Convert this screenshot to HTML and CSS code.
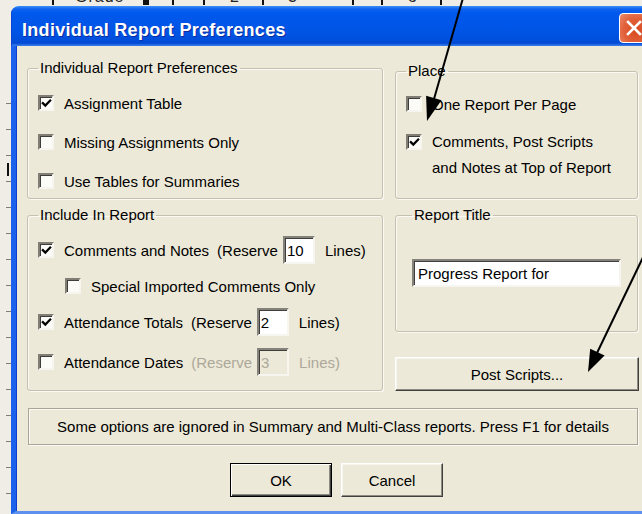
FILE: index.html
```html
<!DOCTYPE html>
<html lang="en">
<head>
<meta charset="utf-8">
<title>Individual Report Preferences</title>
<link rel="stylesheet" href="styles.css">
</head>
<body>
<div class="screen">
  <!-- bottom edge of the document behind the dialog -->
  <div class="backdrop-top">
    <span></span>
    <span class="tick"></span>
    <span class="glyph">Grade</span>
    <span class="block"></span>
    <span class="tick"></span>
    <span class="tick"></span>
    <span class="glyph">2</span>
    <span class="tick"></span>
    <span class="glyph">3</span>
    <span class="tick"></span>
    <span class="tick"></span>
    <span class="glyph">o</span>
    <span class="tick"></span>
  </div>

  <div class="desk-row">
    <div class="backdrop-left"><div class="ticks"><span class="bar"></span></div></div>

    <div class="window">
      <div class="titlebar">
        <span class="title">Individual Report Preferences</span>
        <span class="close-btn">
          <svg width="18" height="18" viewBox="0 0 18 18"><path d="M3 3 L15 15 M15 3 L3 15" stroke="#fff" stroke-width="2.6" stroke-linecap="square"/></svg>
        </span>
      </div>

      <div class="client">
        <div class="panes">
          <div class="col-left">
            <fieldset class="group g-prefs">
              <legend>Individual Report Preferences</legend>
              <div class="stack stack-wide">
                <label class="opt"><span class="cb"><svg viewBox="0 0 12 12"><path d="M2 5.6 L4.7 8.3 L10 2.8" /></svg></span>Assignment Table</label>
                <label class="opt"><span class="cb"></span>Missing Assignments Only</label>
                <label class="opt"><span class="cb"></span>Use Tables for Summaries</label>
              </div>
            </fieldset>

            <fieldset class="group g-include">
              <legend>Include In Report</legend>
              <div class="stack">
                <div class="opt tall">
                  <span class="cb"><svg viewBox="0 0 12 12"><path d="M2 5.6 L4.7 8.3 L10 2.8" /></svg></span>
                  <span>Comments and Notes</span>
                  <span class="paren">(Reserve</span>
                  <input class="field num" type="text" value="10">
                  <span class="lines">Lines)</span>
                </div>
                <div class="opt tall indent">
                  <span class="cb"></span>
                  <span>Special Imported Comments Only</span>
                </div>
                <div class="opt tall">
                  <span class="cb"><svg viewBox="0 0 12 12"><path d="M2 5.6 L4.7 8.3 L10 2.8" /></svg></span>
                  <span>Attendance Totals</span>
                  <span class="paren">(Reserve</span>
                  <input class="field num" type="text" value="2">
                  <span class="lines">Lines)</span>
                </div>
                <div class="opt tall spaced">
                  <span class="cb"></span>
                  <span>Attendance Dates</span>
                  <span class="paren muted">(Reserve</span>
                  <input class="field num off" type="text" value="3" disabled>
                  <span class="lines muted">Lines)</span>
                </div>
              </div>
            </fieldset>
          </div>

          <div class="col-right">
            <fieldset class="group g-place">
              <legend>Place</legend>
              <label class="opt"><span class="cb"></span>One Report Per Page</label>
              <label class="opt two-line"><span class="cb"><svg viewBox="0 0 12 12"><path d="M2 5.6 L4.7 8.3 L10 2.8" /></svg></span><span>Comments, Post Scripts<br>and Notes at Top of Report</span></label>
            </fieldset>

            <fieldset class="group g-title">
              <legend>Report Title</legend>
              <input class="field title-field" type="text" value="Progress Report for">
            </fieldset>

            <button class="btn btn-wide" type="button">Post Scripts...</button>
          </div>
        </div>

        <div class="note">Some options are ignored in Summary and Multi-Class reports. Press F1 for details</div>

        <div class="actions">
          <button class="btn btn-default" type="button">OK</button>
          <button class="btn" type="button">Cancel</button>
        </div>
      </div>
    </div>
  </div>

  <!-- hand-drawn pointer arrows laid over the dialog -->
  <svg class="annotations" width="642" height="514" viewBox="0 0 642 514">
    <line x1="463" y1="-2" x2="434" y2="99" stroke="#000" stroke-width="2"/>
    <polygon points="427,121 441.5,100.3 426.1,95.7" fill="#000"/>
    <line x1="647" y1="249" x2="597" y2="353" stroke="#000" stroke-width="2"/>
    <polygon points="588,372 604.6,355.5 590.2,348.7" fill="#000"/>
  </svg>
</div>
</body>
</html>
```

FILE: styles.css
```css
* { box-sizing: border-box; }

html, body { margin: 0; padding: 0; }

body {
  width: 642px;
  height: 514px;
  overflow: hidden;
  background: #efede6;
  font-family: "Liberation Sans", Arial, sans-serif;
  font-size: 15px;
  letter-spacing: 0;
  color: #000;
}

.screen {
  position: relative;
  width: 642px;
  height: 514px;
  display: flex;
  flex-direction: column;
  overflow: hidden;
}

/* ---------- document peeking out behind the dialog ---------- */
.backdrop-top {
  height: 6px;
  flex: none;
  overflow: hidden;
  display: grid;
  grid-template-columns: 52px 23px 68px 29px 31px 27px 32px 26px 64px 29px 27px 32px auto;
  align-items: start;
}
.backdrop-top .tick { width: 2px; height: 5px; background: #111; }
.backdrop-top .block { width: 6px; height: 5px; background: #111; }
.backdrop-top .glyph {
  display: block;
  margin-top: -11px;
  font-size: 16px;
  line-height: 16px;
  color: #222;
  letter-spacing: 1px;
}

.desk-row {
  flex: 1;
  display: flex;
  min-height: 0;
}

.backdrop-left {
  width: 11px;
  flex: none;
  padding-top: 97px;
}
.backdrop-left .ticks {
  margin-left: 6px;
  width: 5px;
  height: 100%;
  padding-top: 60px;
  background: repeating-linear-gradient(to bottom, #7d7d7d 0 1px, transparent 1px 26px);
}
.backdrop-left .bar {
  display: block;
  margin-left: 1px;
  width: 2px;
  height: 13px;
  background: #111;
}

/* ---------- dialog window ---------- */
.window {
  width: 660px;
  flex: none;
  display: flex;
  flex-direction: column;
  border-radius: 8px 8px 0 0;
  overflow: hidden;
}

.titlebar {
  height: 40px;
  flex: none;
  display: flex;
  align-items: center;
  justify-content: space-between;
  padding: 0 22px 0 11px;
  background: linear-gradient(to bottom,
    #3c8ef8 0px, #0f62ee 3px, #0058ec 7px, #0055e6 60%,
    #004fdc 85%, #0049d2 93%, #2a6ee6 97%, #3b7be8 100%);
  box-shadow: inset 1px 0 0 #0a45d8;
}

.title {
  color: #fff;
  font-weight: bold;
  font-size: 18px;
  letter-spacing: 0.3px;
  margin-top: 8px;
  text-shadow: 1px 1px 0 #0c2ca0;
}

.close-btn {
  width: 30px;
  height: 30px;
  margin-top: 4px;
  display: flex;
  align-items: center;
  justify-content: center;
  border: 1px solid #fff;
  border-radius: 4px;
  background: radial-gradient(circle at 60% 60%, #d8481f 0%, #e1613a 55%, #ec8c6b 100%);
}

.client {
  flex: 1;
  background: #ece9d8;
  border-left: 5px solid #1d62ea;
  border-bottom: 3px solid #5d90ef;
  box-shadow: inset 1px 0 0 #0d3fcf;
  padding: 13px 0 0 11px;
  display: flex;
  flex-direction: column;
}

.panes {
  display: flex;
  gap: 12px;
  width: 611px;
}

.col-left {
  width: 356px;
  display: flex;
  flex-direction: column;
  gap: 7px;
}

.col-right {
  width: 243px;
  padding-top: 3px;
  display: flex;
  flex-direction: column;
  gap: 7px;
}

/* ---------- group boxes ---------- */
.group {
  margin: 0;
  padding: 0 10px;
  min-width: 0;
  border: 1px solid #c4c1b1;
  border-radius: 3px;
  box-shadow: inset 1px 1px 0 #faf9f4, 1px 1px 0 #faf9f4;
}
.group legend {
  padding: 0 2px;
  line-height: 18px;
}

.g-prefs   { height: 140px; padding-top: 14px; }
.g-include { height: 185px; padding-top: 12px; }
.g-place   { height: 137px; padding-top: 12px; }
.g-title   { height: 126px; padding-top: 35px; padding-left: 16px; }

.stack {
  display: flex;
  flex-direction: column;
  gap: 8px;
}
.stack-wide { gap: 15px; }

.opt {
  display: flex;
  align-items: center;
  gap: 10px;
  height: 24px;
  white-space: nowrap;
}
.opt.tall { height: 28px; gap: 0; }
.opt.tall > span:nth-child(2) { margin-left: 10px; }
.opt.indent { padding-left: 27px; }
.opt.spaced { margin-top: 4px; }

.opt.two-line {
  height: auto;
  align-items: flex-start;
  margin-top: 13px;
  line-height: 26px;
}
.opt.two-line .cb { margin-top: 5px; }

.paren { margin-left: 8px; }
.lines { margin-left: 10px; }
.muted { color: #aca899; }

/* classic sunken check box */
.cb {
  flex: none;
  width: 16px;
  height: 16px;
  display: flex;
  align-items: center;
  justify-content: center;
  background: #fbfbf8;
  border: 2px solid;
  border-color: #7f7d74 #f6f5f0 #f6f5f0 #7f7d74;
  box-shadow: inset 1px 1px 0 #3f3e3a;
}
.cb svg { width: 11px; height: 11px; }
.cb svg path {
  fill: none;
  stroke: #000;
  stroke-width: 2.4;
  stroke-linecap: square;
}

/* sunken edit fields */
.field {
  height: 28px;
  margin: 0;
  padding: 0 2px;
  background: #fff;
  border: 2px solid;
  border-color: #84827a #f6f5f0 #f6f5f0 #84827a;
  box-shadow: inset 1px 1px 0 #3f3e3a;
  font: inherit;
  letter-spacing: inherit;
  color: #000;
  outline: none;
}
.field.num { width: 32px; margin-left: 5px; }
.field.off {
  background: #ece9d8;
  color: #aca899;
  -webkit-text-fill-color: #aca899;
  opacity: 1;
}
.title-field { width: 209px; padding-left: 4px; }

/* ---------- buttons ---------- */
.btn {
  height: 34px;
  margin: 0;
  padding: 0;
  background: #ece9d8;
  border: 1px solid;
  border-color: #ffffff #404040 #404040 #ffffff;
  box-shadow: inset -1px -1px 0 #8d8b82, inset 1px 1px 0 #f6f5f0;
  font: inherit;
  letter-spacing: inherit;
  color: #000;
}
.btn-wide {
  width: 244px;
  margin-top: 18px;
}

.note {
  margin: 17px 0 0 1px;
  width: 610px;
  height: 37px;
  display: flex;
  align-items: center;
  justify-content: center;
  border: 1px solid #a8a596;
  box-shadow: inset 1px 1px 0 #fbfaf5, 1px 1px 0 #fbfaf5;
}

.actions {
  margin-top: 18px;
  width: 611px;
  padding-left: 203px;
  display: flex;
  gap: 9px;
}
.actions .btn { width: 102px; }
.actions .btn-default {
  border: 1px solid #000;
  box-shadow: inset 1px 1px 0 #fff, inset -1px -1px 0 #404040, inset -2px -2px 0 #8d8b82;
}

/* ---------- pointer arrows over the dialog ---------- */
.annotations {
  position: absolute;
  left: 0;
  top: 0;
  pointer-events: none;
}
```
